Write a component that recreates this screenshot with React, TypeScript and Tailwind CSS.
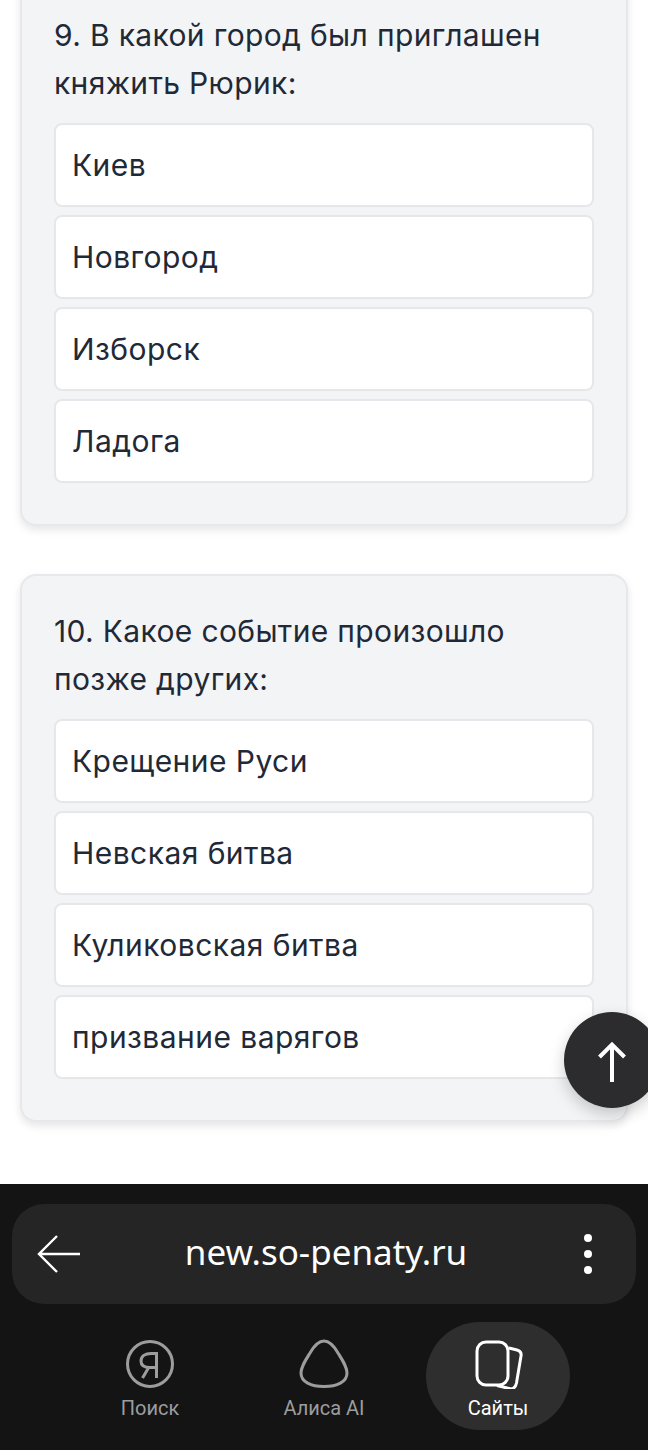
import { ReactNode } from 'react';

const questions = [
    {
        title: '9. В какой город был приглашен княжить Рюрик:',
        answers: ['Киев', 'Новгород', 'Изборск', 'Ладога'],
    },
    {
        title: '10. Какое событие произошло позже других:',
        answers: ['Крещение Руси', 'Невская битва', 'Куликовская битва', 'призвание варягов'],
    },
];

function QuestionCard({ title, answers }: { title: string; answers: string[] }) {
    return (
        <div className="mx-[20px] rounded-[16px] border-2 border-[#e7e8ec] bg-[#f3f4f6] pt-[31px] pr-[32px] pb-[41px] pl-[32px] shadow-[0_4px_8px_rgba(0,0,0,0.1)]">
            <p className="mb-[16px] text-[30px] leading-[48px] tracking-[0.35px] text-[#1f2937]">{title}</p>
            <div className="flex flex-col gap-[8px]">
                {answers.map((answer) => (
                    <div
                        key={answer}
                        className="flex h-[84px] items-center rounded-[8px] border-2 border-[#e5e7eb] bg-white pl-[16px] text-[30px] tracking-[0.45px] text-[#1f2937]"
                    >
                        {answer}
                    </div>
                ))}
            </div>
        </div>
    );
}

function NavItem({ label, active, icon }: { label: string; active?: boolean; icon: ReactNode }) {
    return (
        <div
            className={`flex h-[108px] w-[144px] flex-col items-center rounded-[54px] pt-[17px] ${
                active ? 'bg-[#2e2e2e] text-white' : 'text-[#9d9d9d]'
            }`}
        >
            <div className="h-[50px] w-[50px]">{icon}</div>
            <span className="mt-[5px] font-['Roboto',sans-serif] text-[20px] leading-[28px]">{label}</span>
        </div>
    );
}

export default function App() {
    return (
        <div className="relative flex h-[1450px] w-[648px] flex-col overflow-hidden bg-white font-['Inter',sans-serif]">
            <div className="-mt-[22px] flex h-[1206px] flex-col gap-[48px]">
                {questions.map((q) => (
                    <QuestionCard key={q.title} title={q.title} answers={q.answers} />
                ))}
            </div>

            {/* scroll to top */}
            <div className="absolute top-[1012px] left-[564px] flex h-[96px] w-[96px] items-center justify-center rounded-full bg-[#2c2c2e] shadow-[0_6px_16px_rgba(0,0,0,0.2)]">
                <svg width="96" height="96" viewBox="0 0 96 96" fill="none" stroke="white" strokeWidth="4">
                    <path d="M48 70V33M35.5 45L48 32.5L60.5 45" />
                </svg>
            </div>

            {/* browser bar */}
            <div className="flex flex-1 flex-col bg-[#141414] px-[12px] pt-[20px]">
                <div className="flex h-[100px] items-center justify-between rounded-[32px] bg-[#252525] pr-[44px] pl-[24px]">
                    <svg width="46" height="40" viewBox="0 0 46 40" fill="none" stroke="white" strokeWidth="2.4">
                        <path d="M44 20H3M21 2L3 20L21 38" />
                    </svg>
                    <span className="mr-[14px] mb-[5px] font-['Noto_Sans',sans-serif] text-[35px] leading-none text-white">new.so-penaty.ru</span>
                    <div className="flex flex-col gap-[8px]">
                        <div className="h-[8px] w-[8px] rounded-full bg-white" />
                        <div className="h-[8px] w-[8px] rounded-full bg-white" />
                        <div className="h-[8px] w-[8px] rounded-full bg-white" />
                    </div>
                </div>
                <div className="mt-[18px] flex justify-center gap-[30px]">
                    <NavItem
                        label="Поиск"
                        icon={
                            <svg viewBox="0 0 50 50" fill="none" stroke="currentColor" strokeWidth="3">
                                <circle cx="25" cy="25" r="22.5" />
                                <path d="M31.5 39V14.5H26C20 14.5 16 17.5 16 22C16 26 19 28.5 25 28.5H31M24 28L17.5 39" />
                            </svg>
                        }
                    />
                    <NavItem
                        label="Алиса AI"
                        icon={
                            <svg viewBox="0 0 50 50" fill="none" stroke="currentColor" strokeWidth="3">
                                <path d="M25 2C31 2 35 7 39 14C44 22 48 28 48 34C48 43 38 47.5 25 47.5C12 47.5 2 43 2 34C2 28 6 22 11 14C15 7 19 2 25 2Z" />
                            </svg>
                        }
                    />
                    <NavItem
                        active
                        label="Сайты"
                        icon={
                            <svg viewBox="0 0 50 50" fill="none" stroke="currentColor" strokeWidth="3">
                                <rect x="4" y="3" width="31" height="43" rx="9" />
                                <path d="M36 9L44 11C47.5 12 48.5 14.5 48 17L43.5 44C42.5 49 39.5 50.5 36 49.5L24 46.5" />
                            </svg>
                        }
                    />
                </div>
            </div>
        </div>
    );
}
